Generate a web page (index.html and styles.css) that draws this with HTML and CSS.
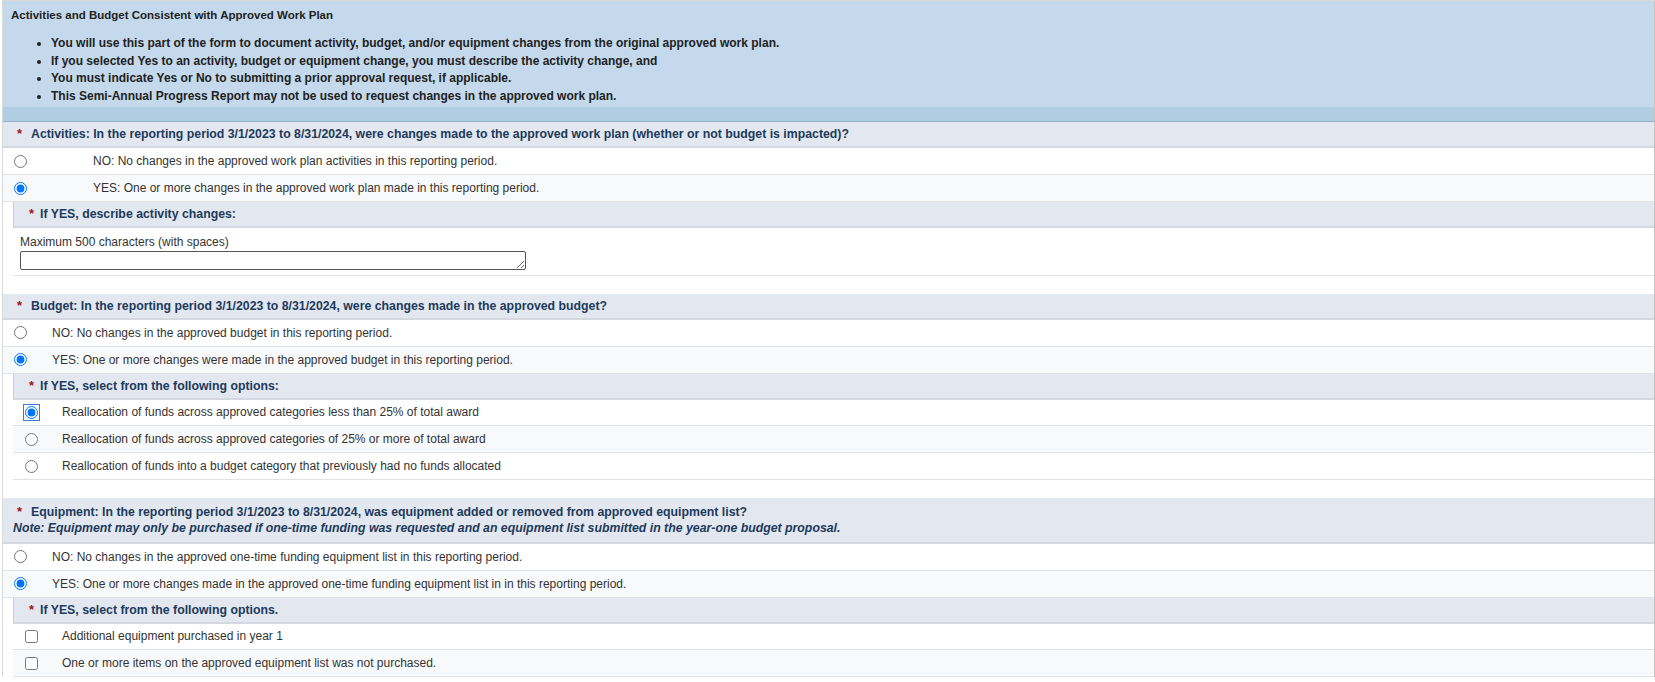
FILE: index.html
```html
<!DOCTYPE html>
<html lang="en">
<head>
  <meta charset="UTF-8" />
  <title>Semi-Annual Progress Report</title>
  <link rel="stylesheet" href="styles.css">
</head>
<body>

  <div class="form-box">

    <div class="intro">
      <div class="intro-title">Activities and Budget Consistent with Approved Work Plan</div>
      <ul class="intro-list">
        <li>You will use this part of the form to document activity, budget, and/or equipment changes from the original approved work plan.</li>
        <li>If you selected Yes to an activity, budget or equipment change, you must describe the activity change, and</li>
        <li>You must indicate Yes or No to submitting a prior approval request, if applicable.</li>
        <li>This Semi-Annual Progress Report may not be used to request changes in the approved work plan.</li>
      </ul>
      <div class="intro-band"></div>
    </div>

    <!-- activities -->
    <div class="question">
      <div class="q-head"><span class="req">*</span>Activities: In the reporting period 3/1/2023 to 8/31/2024, were changes made to the approved work plan (whether or not budget is impacted)?</div>
      <label class="opt wide"><input type="radio" name="activities"><span>NO: No changes in the approved work plan activities in this reporting period.</span></label>
      <label class="opt wide alt"><input type="radio" name="activities" checked><span>YES: One or more changes in the approved work plan made in this reporting period.</span></label>
      <div class="sub">
        <div class="sub-head"><span class="req">*</span>If YES, describe activity changes:</div>
        <div class="text-field">
          <div class="hint">Maximum 500 characters (with spaces)</div>
          <textarea id="activity-changes" maxlength="500"></textarea>
        </div>
      </div>
    </div>

    <!-- budget -->
    <div class="question">
      <div class="q-head"><span class="req">*</span>Budget: In the reporting period 3/1/2023 to 8/31/2024, were changes made in the approved budget?</div>
      <label class="opt"><input type="radio" name="budget"><span>NO: No changes in the approved budget in this reporting period.</span></label>
      <label class="opt alt"><input type="radio" name="budget" checked><span>YES: One or more changes were made in the approved budget in this reporting period.</span></label>
      <div class="sub">
        <div class="sub-head"><span class="req">*</span>If YES, select from the following options:</div>
        <label class="opt"><input type="radio" name="budget-opt" class="focused" checked><span>Reallocation of funds across approved categories less than 25% of total award</span></label>
        <label class="opt alt"><input type="radio" name="budget-opt"><span>Reallocation of funds across approved categories of 25% or more of total award</span></label>
        <label class="opt"><input type="radio" name="budget-opt"><span>Reallocation of funds into a budget category that previously had no funds allocated</span></label>
      </div>
    </div>

    <!-- equipment -->
    <div class="question">
      <div class="q-head tall">
        <span class="req">*</span>Equipment: In the reporting period 3/1/2023 to 8/31/2024, was equipment added or removed from approved equipment list?
        <span class="note">Note: Equipment may only be purchased if one-time funding was requested and an equipment list submitted in the year-one budget proposal.</span>
      </div>
      <label class="opt"><input type="radio" name="equipment"><span>NO: No changes in the approved one-time funding equipment list in this reporting period.</span></label>
      <label class="opt alt"><input type="radio" name="equipment" checked><span>YES: One or more changes made in the approved one-time funding equipment list in in this reporting period.</span></label>
      <div class="sub">
        <div class="sub-head"><span class="req">*</span>If YES, select from the following options.</div>
        <label class="opt"><input type="checkbox" name="equip-opt"><span>Additional equipment purchased in year 1</span></label>
        <label class="opt alt"><input type="checkbox" name="equip-opt"><span>One or more items on the approved equipment list was not purchased.</span></label>
      </div>
    </div>

  </div>

</body>
</html>
```

FILE: styles.css
```css
body {
  margin: 0;
  font-family: "Liberation Sans", Arial, sans-serif;
  font-size: 12px;
  color: #333;
  background: #fff;
}
.form-box {
  margin-left: 2px;
  border-top: 1px solid #d9d9d9;
  border-left: 1px solid #d9d9d9;
  border-right: 1px solid #c4c4c4;
}
.intro {
  background: #c4d9ec;
}
.intro-title {
  padding: 7px 8px 0;
  font-size: 11.5px;
  font-weight: bold;
  color: #222;
  line-height: 14px;
}
.intro-list {
  margin: 13px 0 0;
  padding: 0 0 2px 48px;
  font-size: 12px;
  font-weight: bold;
  color: #222;
  line-height: 17.6px;
}
.intro-band {
  height: 14px;
  background: #b1cde1;
  border-bottom: 1px solid #8fb0c8;
}
.question + .question {
  margin-top: 18px;
}
.q-head {
  background: #e3e7f0;
  color: #1d3b5c;
  font-size: 12.3px;
  font-weight: bold;
  line-height: 16px;
  padding: 4px 8px 4px 14px;
  border-bottom: 2px solid #d5d8e0;
}
.q-head.tall {
  padding-top: 6px;
  padding-bottom: 6px;
}
.req {
  display: inline-block;
  width: 14px;
  color: #a31515;
  font-size: 13px;
}
.note {
  display: block;
  margin-left: -4px;
  font-style: italic;
}
.opt {
  display: flex;
  align-items: center;
  height: 26.8px;
  box-sizing: border-box;
  padding-left: 11px;
  background: #fff;
  border-bottom: 1px solid #e2e2e2;
  cursor: pointer;
}
.opt.alt {
  background: #f8f9fb;
}
.opt input {
  margin: 0;
  width: 13px;
  height: 13px;
  flex: none;
}
.opt span {
  margin-left: 25px;
}
.opt.wide span {
  margin-left: 66px;
}
.sub {
  margin-left: 10px;
}
.sub-head {
  background: #e3e7f0;
  color: #1d3b5c;
  font-size: 12.3px;
  font-weight: bold;
  line-height: 16px;
  padding: 4px 8px 4px 15px;
  border-left: 1px solid #c9cdd6;
  border-bottom: 2px solid #d5d8e0;
}
.sub-head .req {
  width: 11px;
}
.sub .opt {
  padding-left: 12px;
}
.sub .opt span {
  margin-left: 24px;
}
.focused {
  outline: 1px solid #3a7bd5;
  outline-offset: 1px;
}
.text-field {
  padding: 7px 0 5px 7px;
  border-bottom: 1px solid #e2e2e2;
}
.hint {
  line-height: 14px;
}
.text-field textarea {
  display: block;
  margin-top: 2px;
  width: 506px;
  height: 19px;
  box-sizing: border-box;
  border: 1px solid #555;
  border-radius: 2px;
  font-family: inherit;
  font-size: 12px;
  padding: 1px 3px;
}
```
